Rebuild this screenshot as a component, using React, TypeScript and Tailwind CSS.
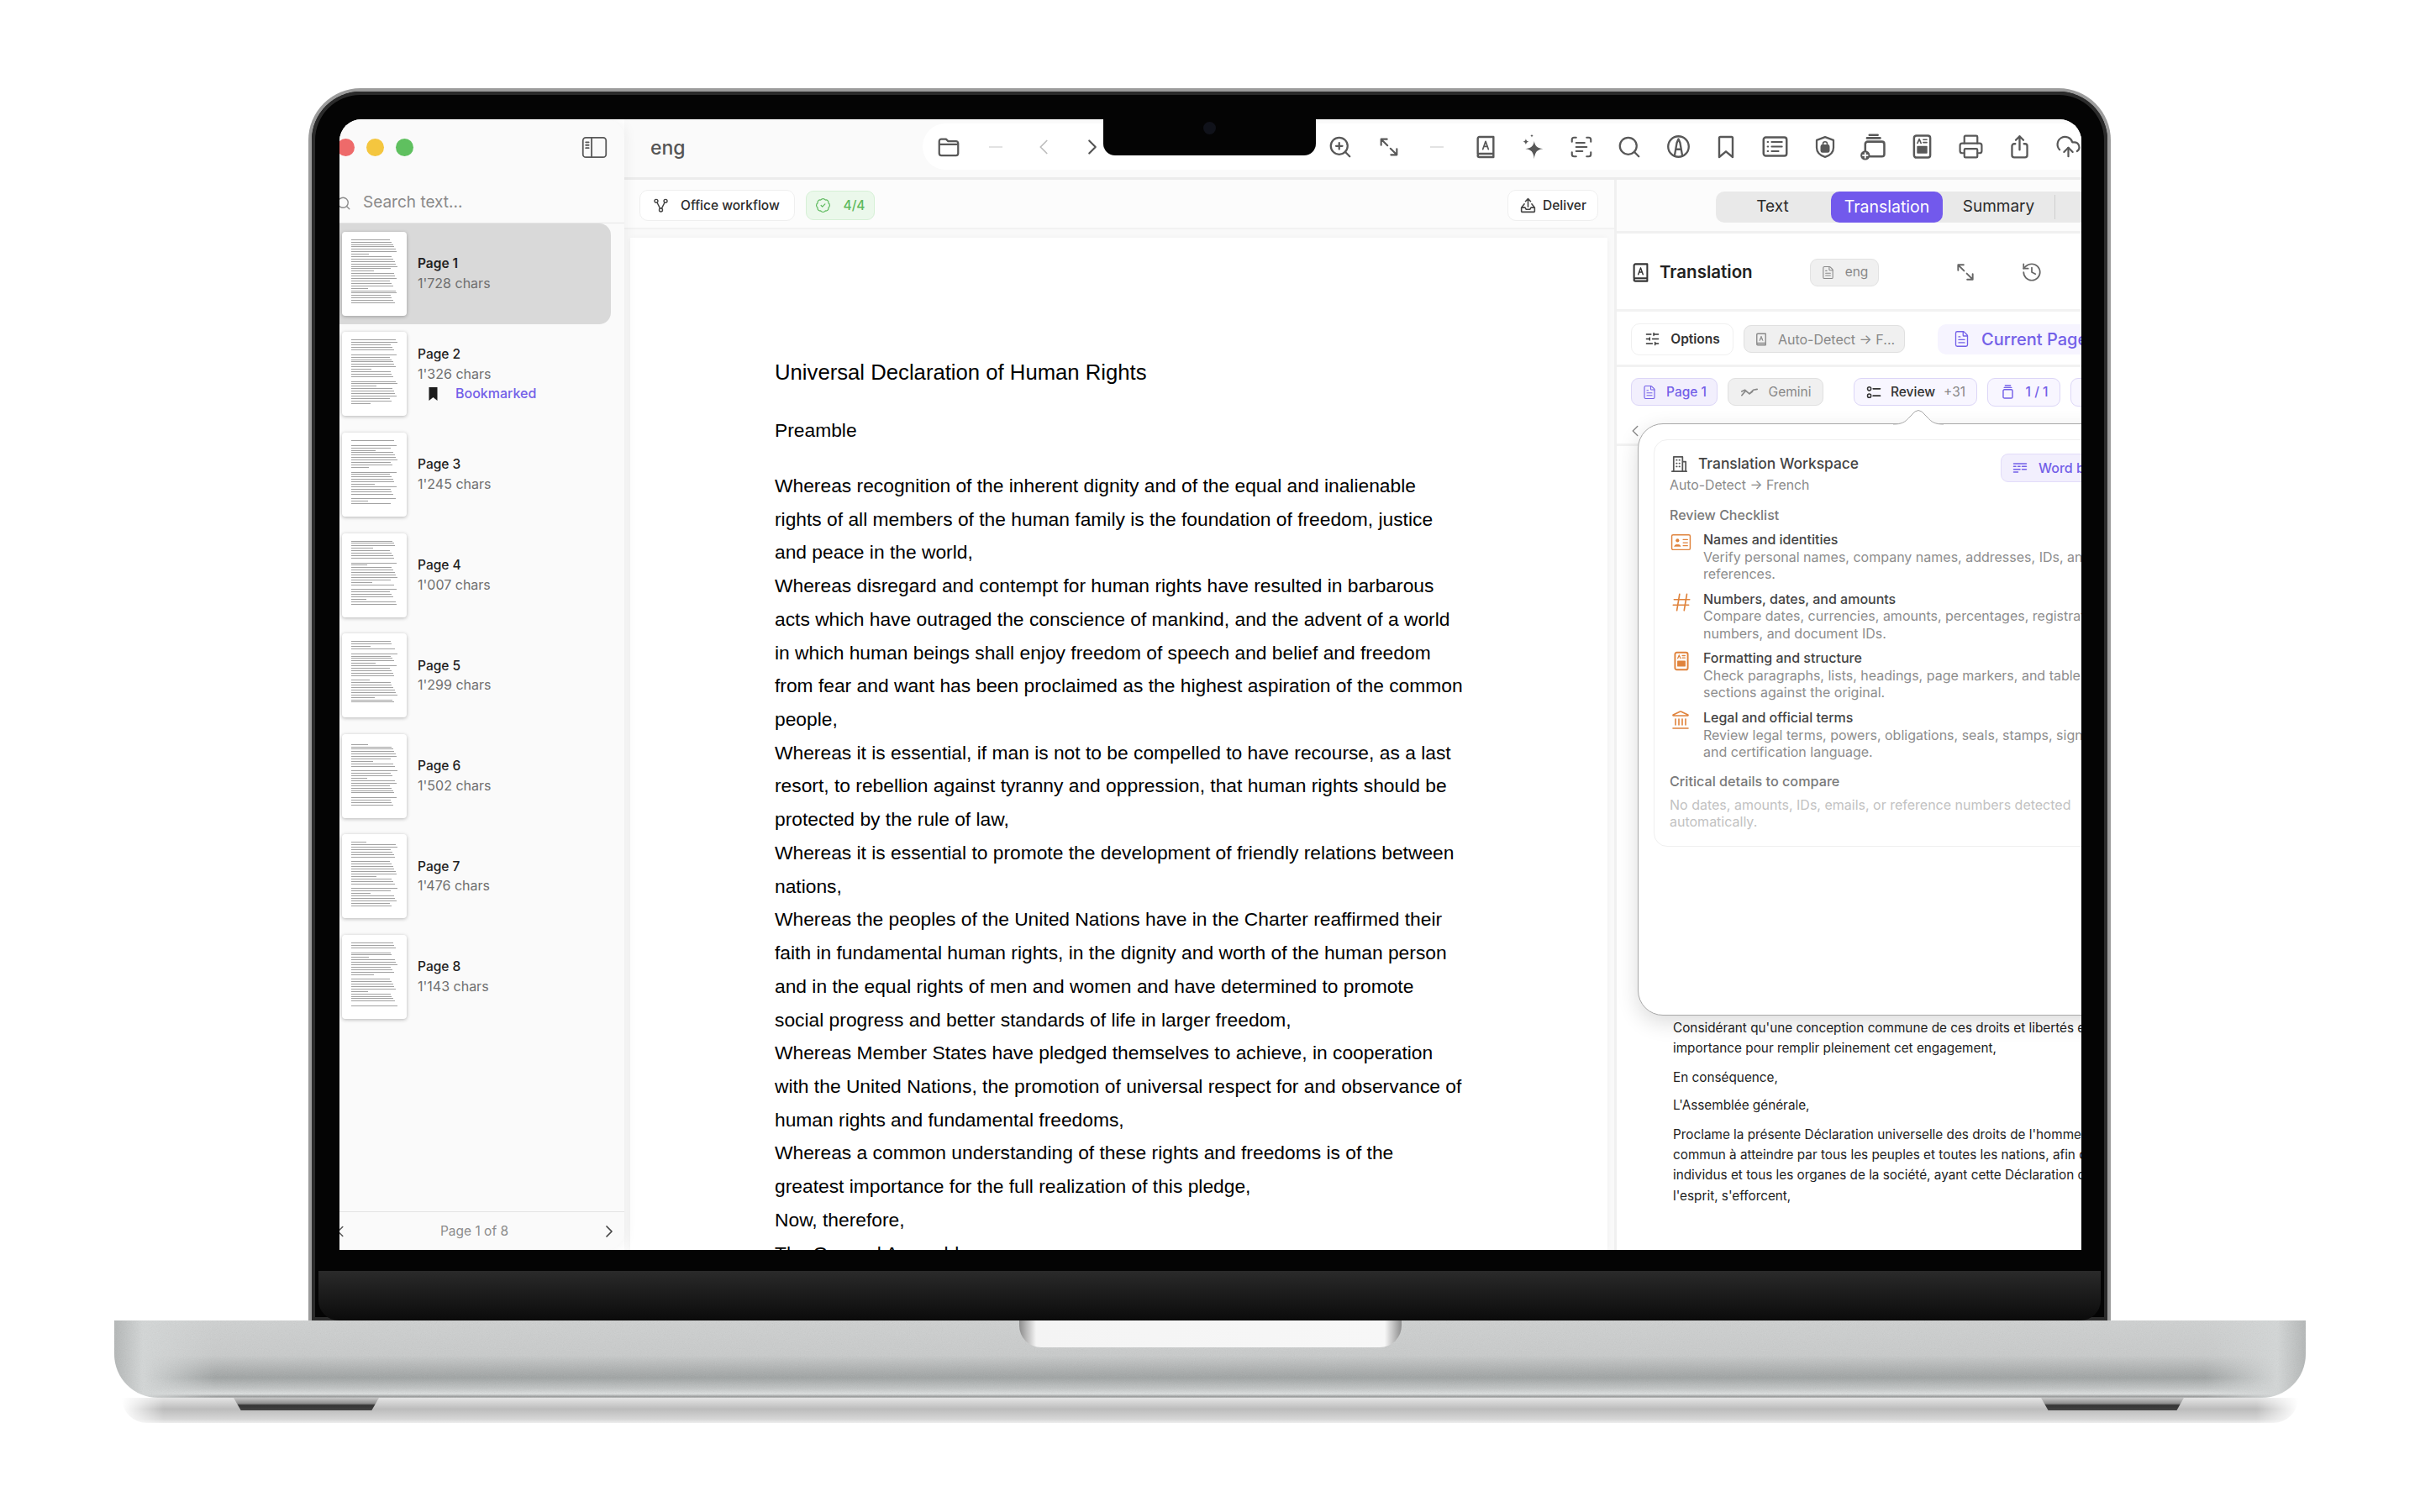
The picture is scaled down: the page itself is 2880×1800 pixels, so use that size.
import { BadgeCheck, ChevronLeft, ChevronRight, CloudUpload, FileText, History, Landmark, Printer, ScanText, Search, SlidersHorizontal, ZoomIn } from 'lucide-react';
import type { ReactNode } from 'react';

const PAGES = ["1'728", "1'326", "1'245", "1'007", "1'299", "1'502", "1'476", "1'143"];

const DOC_LINES = [
  'Whereas recognition of the inherent dignity and of the equal and inalienable',
  'rights of all members of the human family is the foundation of freedom, justice',
  'and peace in the world,',
  'Whereas disregard and contempt for human rights have resulted in barbarous',
  'acts which have outraged the conscience of mankind, and the advent of a world',
  'in which human beings shall enjoy freedom of speech and belief and freedom',
  'from fear and want has been proclaimed as the highest aspiration of the common',
  'people,',
  'Whereas it is essential, if man is not to be compelled to have recourse, as a last',
  'resort, to rebellion against tyranny and oppression, that human rights should be',
  'protected by the rule of law,',
  'Whereas it is essential to promote the development of friendly relations between',
  'nations,',
  'Whereas the peoples of the United Nations have in the Charter reaffirmed their',
  'faith in fundamental human rights, in the dignity and worth of the human person',
  'and in the equal rights of men and women and have determined to promote',
  'social progress and better standards of life in larger freedom,',
  'Whereas Member States have pledged themselves to achieve, in cooperation',
  'with the United Nations, the promotion of universal respect for and observance of',
  'human rights and fundamental freedoms,',
  'Whereas a common understanding of these rights and freedoms is of the',
  'greatest importance for the full realization of this pledge,',
  'Now, therefore,',
  'The General Assembly,',
];

const CHECKLIST = [
  { title: 'Names and identities', lines: ['Verify personal names, company names, addresses, IDs, and', 'references.'], icon: <ContactIcon /> },
  { title: 'Numbers, dates, and amounts', lines: ['Compare dates, currencies, amounts, percentages, registration', 'numbers, and document IDs.'], icon: <HashIcon /> },
  { title: 'Formatting and structure', lines: ['Check paragraphs, lists, headings, page markers, and table', 'sections against the original.'], icon: <DocImageIcon className="w-[26px] h-[26px] text-[#e0833c]" /> },
  { title: 'Legal and official terms', lines: ['Review legal terms, powers, obligations, seals, stamps, signatures,', 'and certification language.'], icon: <Landmark className="w-[24px] h-[24px] text-[#e0833c]" strokeWidth={1.6} /> },
];

type IconProps = { className?: string };

function Svg({ className, children }: IconProps & { children: ReactNode }) {
  return (
    <svg viewBox="0 0 24 24" fill="none" stroke="currentColor" strokeWidth={1.8} strokeLinecap="round" strokeLinejoin="round" className={className}>
      {children}
    </svg>
  );
}

function FolderIcon({ className }: IconProps) {
  return <Svg className={className}><path d="M3 7.500V18a2 2 0 0 0 2 2h14a2 2 0 0 0 2-2V8.500a2 2 0 0 0-2-2h-7.500L9.500 4.500H5a2 2 0 0 0-2 2zM3 9.500h18" /></Svg>;
}
function ExpandIcon({ className }: IconProps) {
  return <Svg className={className}><path d="M4 10V4h6M4 4l6.500 6.500M20 14v6h-6M20 20l-6.500-6.500" /></Svg>;
}
function BookIcon({ className }: IconProps) {
  return (
    <Svg className={className}>
      <path d="M5 18V4.500A1.500 1.500 0 0 1 6.500 3H19v15H6.500A1.500 1.500 0 0 0 5 19.500 1.500 1.500 0 0 0 6.500 21H19v-3" />
      <path d="M9.500 14l2.500-7 2.500 7M10.400 11.500h3.200" strokeWidth={1.3} />
    </Svg>
  );
}
function SparkleIcon({ className }: IconProps) {
  return (
    <svg viewBox="0 0 24 24" fill="currentColor" className={className}>
      <path d="M14 7c.6 4 2.500 6 7.500 6.500C16.500 14 14.600 16 14 22c-.6-6-2.500-8-7.500-8.500C11.500 13 13.400 11 14 7z" />
      <path d="M7 5c.2 1.600 1 2.300 2.500 2.500C8 7.700 7.200 8.500 7 10c-.2-1.500-1-2.300-2.500-2.500C6 7.300 6.800 6.600 7 5zM12 1c.1 1 .6 1.400 1.500 1.500-.9.100-1.400.6-1.500 1.500-.1-.9-.6-1.400-1.500-1.500.9-.1 1.400-.5 1.500-1.500z" />
    </svg>
  );
}
function NibIcon({ className }: IconProps) {
  return <Svg className={className}><circle cx="12" cy="12" r="9.500" /><path d="M8.500 20l2-11.500L12 5l1.500 3.500 2 11.500M10.500 14.500h3" /></Svg>;
}
function BookmarkIcon({ className }: IconProps) {
  return <Svg className={className}><path d="M7 3h10a1 1 0 0 1 1 1v17l-6-5-6 5V4a1 1 0 0 1 1-1z" /></Svg>;
}
function ListCardIcon({ className }: IconProps) {
  return <Svg className={className}><rect x="2" y="4" width="20" height="16" rx="2" /><path d="M5.500 8h.5M9 8h9M5.500 12h.5M9 12h9M5.500 16h.5M9 16h6" strokeWidth={1.4} /></Svg>;
}
function ShieldIcon({ className }: IconProps) {
  return (
    <Svg className={className}>
      <path d="M12 2.500l8 3v7c0 4.500-3.500 7.500-8 9-4.500-1.500-8-4.500-8-9v-7z" />
      <rect x="8.500" y="10.500" width="7" height="6" rx="1" fill="currentColor" />
      <path d="M10 10.500V9a2 2 0 0 1 4 0v1.500" strokeWidth={1.3} />
    </Svg>
  );
}
function StackPlusIcon({ className }: IconProps) {
  return (
    <Svg className={className}>
      <path d="M9 2h7M7 4.500h11M5.500 16V9.500a2 2 0 0 1 2-2h12a2 2 0 0 1 2 2V18a2 2 0 0 1-2 2h-10" />
      <circle cx="5.500" cy="19" r="4" fill="currentColor" stroke="none" />
      <path d="M5.500 17v4M3.500 19h4" stroke="#fff" strokeWidth={1.3} />
    </Svg>
  );
}
function DocImageIcon({ className }: IconProps) {
  return (
    <Svg className={className}>
      <rect x="5" y="2.500" width="14" height="19" rx="2" />
      <path d="M8 9l1.500-3.500L11 9M13 6h3M13 8.500h3" strokeWidth={1.2} />
      <path d="M8 12h8v5.500H8z" fill="currentColor" strokeWidth={1} />
    </Svg>
  );
}
function ShareIcon({ className }: IconProps) {
  return <Svg className={className}><path d="M12 15V2.500M8.500 6L12 2.500 15.500 6M8 9.500H7a2 2 0 0 0-2 2V20a2 2 0 0 0 2 2h10a2 2 0 0 0 2-2v-8.500a2 2 0 0 0-2-2h-1" /></Svg>;
}
function SidebarIcon({ className }: IconProps) {
  return <Svg className={className}><rect x="2" y="3.500" width="20" height="17" rx="2.500" strokeWidth={1.3} /><path d="M9.500 3.500v17M4.500 7.500h2.500M4.500 10h2.500M4.500 12.500h2.500" strokeWidth={1.3} /></Svg>;
}
function WorkflowIcon({ className }: IconProps) {
  return <Svg className={className}><circle cx="5" cy="5.500" r="2.500" /><circle cx="19" cy="5.500" r="2.500" /><circle cx="12" cy="19" r="2.500" /><path d="M6.500 8l4.300 8.500M17.500 8l-4.300 8.500" /></Svg>;
}
function DeliverIcon({ className }: IconProps) {
  return <Svg className={className}><path d="M12 14V3M8.500 6.500L12 3l3.500 3.500M7 10l-4 5v5a1 1 0 0 0 1 1h16a1 1 0 0 0 1-1v-5l-4-5M3 15h5l1.500 2.500h5L16 15h5" /></Svg>;
}
function WaveIcon({ className }: IconProps) {
  return <Svg className={className}><path d="M2 16l5-6 5 4 5-5 5-1M2 11l4-2 6 5 4-3" /></Svg>;
}
function ReviewIcon({ className }: IconProps) {
  return <Svg className={className}><circle cx="5.500" cy="7" r="2.500" /><circle cx="5.500" cy="17" r="2.500" /><path d="M11 7h10M11 17h10" strokeWidth={2} /></Svg>;
}
function JarIcon({ className }: IconProps) {
  return <Svg className={className}><path d="M8 2.500h8M6.500 5.500h11" /><rect x="5" y="8.500" width="14" height="13" rx="2" /></Svg>;
}
function WrapIcon({ className }: IconProps) {
  return <Svg className={className}><path d="M3 6h18M3 10h3M9 10h3M15 10h6M3 14h9M15 14h6M3 18h6" /></Svg>;
}
function BuildingIcon({ className }: IconProps) {
  return <Svg className={className}><path d="M5 21V3h11v18M16 9h4v12M3 21h18M8.500 7h.5M12 7h.5M8.500 11h.5M12 11h.5M8.500 15h.5M12 15h.5" /></Svg>;
}
function ContactIcon() {
  return (
    <Svg className="w-[25px] h-[25px] text-[#e0833c]">
      <rect x="1.500" y="3.500" width="21" height="17" rx="1.500" strokeWidth={1.4} />
      <circle cx="8" cy="10" r="2" fill="currentColor" stroke="none" />
      <path d="M4.500 16.500c.5-2.500 6.500-2.500 7 0z" fill="currentColor" strokeWidth={0.6} />
      <path d="M14.500 9h5M14.500 12.500h5M14.500 16h5" strokeWidth={1.2} />
    </Svg>
  );
}
function HashIcon() {
  return <Svg className="w-[26px] h-[26px] text-[#e0833c]"><path d="M10 3L7 21M18 3l-3 18M4 9h17M3 15h17" strokeWidth={1.5} /></Svg>;
}

function ToolIcon({ children }: { children: ReactNode }) {
  return <div className="w-[57.700px] flex-none flex items-center justify-center text-[#585858]">{children}</div>;
}

function Divider() {
  return <div className="w-[16px] h-[2px] bg-[#e2e2e2]" />;
}

function Thumb({ seed }: { seed: number }) {
  const lines = Array.from({ length: 27 }, (_, i) => {
    if (seed > 0 && (i * 3 + seed) % 11 === 5) return 0;
    if ((i + seed) % 7 === 6) return 32 + ((i * 5) % 24);
    return 84 + ((i * 37 + seed * 13) % 17);
  });
  return (
    <div className="w-[77px] h-[100px] flex-none bg-white rounded-[4px] shadow-[0_1px_4px_rgba(0,0,0,0.28)] pt-[9px] px-[11px] flex flex-col gap-[1.900px]">
      {lines.map((w, i) => (
        <div key={i} className="h-[1px] bg-[#a2a2a2]" style={{ width: `${w}%`, opacity: w === 0 ? 0 : 1 }} />
      ))}
    </div>
  );
}

function Sidebar() {
  return (
    <aside className="w-[339px] flex-none flex flex-col bg-[#fafafa] rounded-r-[22px] shadow-[3px_0_14px_rgba(0,0,0,0.05)] z-10">
      <div className="h-[66px] flex-none flex items-center justify-between pr-[19px]">
        <div className="flex items-center gap-[14px] -ml-[3px]">
          <div className="w-[21px] h-[21px] rounded-full bg-[#ee6a6a]" />
          <div className="w-[21px] h-[21px] rounded-full bg-[#f4c63f]" />
          <div className="w-[21px] h-[21px] rounded-full bg-[#5fc05f]" />
        </div>
        <SidebarIcon className="w-[33px] h-[33px] text-[#585858]" />
      </div>
      <div className="h-[58px] flex-none flex items-center gap-[14px] pt-[10px] -ml-[4px] border-b border-[#e6e6e6] text-[#8a8a8a]">
        <Search className="w-[18px] h-[18px] flex-none" strokeWidth={1.8} />
        <span className="text-[19px]">Search text...</span>
      </div>
      <div className="flex-1 flex flex-col">
        {PAGES.map((chars, i) => (
          <div key={i} className={`h-[119.600px] flex-none flex items-center gap-[13px] pl-[3px] w-[323px] rounded-r-[14px] ${i === 0 ? 'bg-[#d9d9d9]' : ''}`}>
            <Thumb seed={i} />
            <div className="flex flex-col text-[15.500px] leading-[23.500px]">
              <span className={`text-[#222] ${i === 0 ? 'font-semibold' : 'font-medium'}`}>Page {i + 1}</span>
              <span className="text-[16px] text-[#6f6f6f]">{chars} chars</span>
              {i === 1 && (
                <span className="flex items-center text-[16px] text-[#7360e8] font-medium">
                  <svg viewBox="0 0 10 16" className="w-[11px] h-[16px] ml-[13px] mr-[21px]" fill="#1c1c1c"><path d="M0 0h10v16L5 12 0 16z" /></svg>
                  Bookmarked
                </span>
              )}
            </div>
          </div>
        ))}
      </div>
      <div className="h-[46px] flex-none border-t border-[#e4e4e4] flex items-center justify-between pr-[6px] -ml-[10px] text-[#8c8c8c]">
        <ChevronLeft className="w-[22px] h-[22px] text-[#555]" strokeWidth={1.7} />
        <span className="text-[15.500px]">Page 1 of 8</span>
        <ChevronRight className="w-[24px] h-[24px] text-[#444]" strokeWidth={1.7} />
      </div>
    </aside>
  );
}

function TopBar() {
  return (
    <header className="h-[72px] flex-none flex border-b-[3px] border-[#ececec] bg-[#fafafa]">
      <div className="w-[355px] flex-none pl-[31px] pt-[18px] text-[23px] leading-[32px] font-medium text-[#555]">eng</div>
      <div className="flex-1 h-[55px] mt-[5px] bg-white rounded-l-[28px] flex items-center overflow-hidden">
        <div className="w-[58px] flex-none flex justify-center pl-[3px] text-[#585858]"><FolderIcon className="w-[30px] h-[30px]" /></div>
        <div className="w-[57px] flex-none flex justify-center"><Divider /></div>
        <div className="w-[57px] flex-none flex justify-center"><ChevronLeft className="w-[30px] h-[30px] text-[#bdbdbd]" strokeWidth={1.4} /></div>
        <div className="w-[60px] flex-none flex justify-center"><ChevronRight className="w-[30px] h-[30px] text-[#555]" strokeWidth={1.7} /></div>
        <div className="w-[236px] flex-none" />
        <ToolIcon><ZoomIn className="w-[30px] h-[30px]" strokeWidth={1.8} /></ToolIcon>
        <ToolIcon><ExpandIcon className="w-[28px] h-[28px]" /></ToolIcon>
        <ToolIcon><Divider /></ToolIcon>
        <ToolIcon><BookIcon className="w-[32px] h-[32px]" /></ToolIcon>
        <ToolIcon><SparkleIcon className="w-[34px] h-[34px] -ml-[5px]" /></ToolIcon>
        <ToolIcon><ScanText className="w-[30px] h-[30px] -ml-[3px]" strokeWidth={1.7} /></ToolIcon>
        <ToolIcon><Search className="w-[30px] h-[30px] -ml-[4px]" strokeWidth={1.8} /></ToolIcon>
        <ToolIcon><NibIcon className="w-[31px] h-[31px] -ml-[3px]" /></ToolIcon>
        <ToolIcon><BookmarkIcon className="w-[32px] h-[32px] -ml-[4px]" /></ToolIcon>
        <ToolIcon><ListCardIcon className="w-[33px] h-[33px] -ml-[4px]" /></ToolIcon>
        <ToolIcon><ShieldIcon className="w-[30px] h-[30px]" /></ToolIcon>
        <ToolIcon><StackPlusIcon className="w-[34px] h-[34px]" /></ToolIcon>
        <ToolIcon><DocImageIcon className="w-[33px] h-[33px]" /></ToolIcon>
        <ToolIcon><Printer className="w-[31px] h-[31px] ml-[2px]" strokeWidth={1.7} /></ToolIcon>
        <ToolIcon><ShareIcon className="w-[31px] h-[31px] ml-[3px]" /></ToolIcon>
        <ToolIcon><CloudUpload className="w-[31px] h-[31px] ml-[3px]" strokeWidth={1.7} /></ToolIcon>
      </div>
    </header>
  );
}

function DocumentColumn() {
  return (
    <section className="w-[1178px] flex-none flex flex-col bg-[#f9f9f9] min-h-0">
      <div className="h-[59px] flex-none flex items-center justify-between pt-[4px] pl-[18px] pr-[19px] bg-[#fcfcfc] border-b-[2px] border-[#f2f2f2]">
        <div className="flex items-center gap-[13px]">
          <div className="w-[185px] h-[37px] flex items-center gap-[14px] pl-[15px] bg-white border border-[#efefef] rounded-[10px] text-[15.500px] font-medium text-[#2c2c2c] whitespace-nowrap">
            <WorkflowIcon className="w-[19px] h-[19px] flex-none text-[#444]" />
            Office workflow
          </div>
          <div className="w-[82px] h-[35px] flex items-center justify-center gap-[14px] bg-[#ebf8eb] border border-[#d6f0d6] rounded-[9px] text-[15.500px] font-medium text-[#5cb95c]">
            <BadgeCheck className="w-[19px] h-[19px]" strokeWidth={1.5} />
            4/4
          </div>
        </div>
        <div className="w-[108px] h-[37px] flex items-center justify-center gap-[7px] bg-white border border-[#efefef] rounded-[10px] text-[15.500px] font-medium text-[#2c2c2c]">
          <DeliverIcon className="w-[21px] h-[21px] flex-none text-[#444]" />
          Deliver
        </div>
      </div>
      <div className="flex-1 ml-[7px] mr-[8px] mt-[10px] bg-white pt-[140px] pl-[172px] overflow-hidden shadow-[0_0_6px_rgba(0,0,0,0.04)] font-['Liberation_Sans',sans-serif] text-black whitespace-nowrap">
        <div className="text-[25.700px] leading-[40px]">Universal Declaration of Human Rights</div>
        <div className="text-[22.800px] leading-[40px] mt-[29px]">Preamble</div>
        <div className="text-[22.800px] leading-[39.720px] mt-[27px]">
          {DOC_LINES.map((line) => (
            <div key={line}>{line}</div>
          ))}
        </div>
      </div>
    </section>
  );
}

function ReviewPopover() {
  return (
    <div className="absolute left-[25px] top-[290px] w-[620px] h-[705px] bg-white rounded-[30px] border border-[#a9a9a9] shadow-[0_8px_26px_rgba(0,0,0,0.14)] pl-[18px] pt-[18px] z-20">
      <svg viewBox="0 0 60 20" className="absolute left-[303px] -top-[18px] w-[60px] h-[20px]">
        <path d="M0 18C10 18 14 16 20 9L26 3Q30 0 34 3L40 9C46 16 50 18 60 18V20H0Z" fill="#fff" />
        <path d="M0 18C10 18 14 16 20 9L26 3Q30 0 34 3L40 9C46 16 50 18 60 18" fill="none" stroke="#a9a9a9" strokeWidth="1" />
      </svg>
      <div className="w-[600px] h-[485px] border border-[#efefef] rounded-[16px] pl-[18px] pt-[16px] whitespace-nowrap">
        <div className="flex items-start">
          <div className="w-[394px] flex-none">
            <div className="flex items-center gap-[11px] h-[24px] text-[17.400px] font-medium text-[#444]">
              <BuildingIcon className="w-[23px] h-[23px] flex-none text-[#555]" />
              Translation Workspace
            </div>
            <div className="mt-[4px] text-[15.800px] leading-[20px] text-[#8a8a8a]">Auto-Detect → French</div>
          </div>
          <div className="w-[170px] h-[34px] flex-none flex items-center gap-[12px] pl-[12px] bg-[#f2effd] border border-[#e2dcf9] rounded-[9px] text-[16px] font-medium text-[#7360e8]">
            <WrapIcon className="w-[20px] h-[20px] flex-none" />
            Word by word
          </div>
        </div>
        <div className="mt-[15px] text-[16px] leading-[20px] font-medium text-[#7a7a7a]">Review Checklist</div>
        <div className="mt-[9px] flex flex-col gap-[9.200px]">
          {CHECKLIST.map((item) => (
            <div key={item.title} className="flex">
              <div className="w-[40px] flex-none flex justify-start pl-[1px] pt-[1px]">{item.icon}</div>
              <div className="flex flex-col text-[16px] leading-[20.500px]">
                <span className="font-medium text-[#444]">{item.title}</span>
                {item.lines.map((line) => (
                  <span key={line} className="text-[#8d8d8d]">{line}</span>
                ))}
              </div>
            </div>
          ))}
        </div>
        <div className="mt-[14px] text-[16.200px] leading-[20px] font-medium text-[#7a7a7a]">Critical details to compare</div>
        <div className="mt-[8px] text-[16px] leading-[20px] text-[#c2c2c2]">
          <div>No dates, amounts, IDs, emails, or reference numbers detected</div>
          <div>automatically.</div>
        </div>
      </div>
    </div>
  );
}

function TranslationPanel() {
  return (
    <section className="flex-1 relative flex flex-col border-l-[3px] border-[#f0f0f0] bg-white min-w-0">
      <div className="h-[64px] flex-none flex items-start pt-[14px] pl-[118px] border-b-[3px] border-[#f0f0f0] bg-[#fcfcfc]">
        <div className="flex items-center h-[37px] w-[500px] flex-none bg-[#e9e9e9] rounded-[10px] text-[19px] text-[#2b2b2b]">
          <div className="w-[135px] text-center">Text</div>
          <div className="w-[133px] ml-[2px] h-full flex items-center justify-center rounded-[10px] bg-[#7259ec] text-[19.500px] text-white">Translation</div>
          <div className="w-[134px] text-center border-r border-[#cfcfcf]">Summary</div>
        </div>
      </div>
      <div className="h-[93px] flex-none flex items-center pt-[2px] border-b-[3px] border-[#f2f2f2]">
        <BookIcon className="ml-[15px] w-[27px] h-[27px] flex-none text-[#333]" />
        <span className="ml-[9px] w-[180px] flex-none text-[20.500px] font-semibold text-[#222]">Translation</span>
        <div className="-ml-[1px] w-[82px] h-[33px] flex items-center justify-center gap-[12px] bg-[#f0f0f0] border border-[#e2e2e2] rounded-[9px] text-[15.500px] text-[#888]">
          <FileText className="w-[17px] h-[17px]" strokeWidth={1.5} />
          eng
        </div>
        <ExpandIcon className="ml-[90px] w-[26px] h-[26px] text-[#666]" />
        <History className="ml-[53px] w-[26px] h-[26px] text-[#666]" strokeWidth={1.6} />
      </div>
      <div className="h-[66px] flex-none flex items-center pl-[17px] pt-[2px] border-b-[3px] border-[#f2f2f2]">
        <div className="w-[122px] h-[38px] flex-none flex items-center justify-center gap-[12px] bg-white border border-[#f0f0f0] rounded-[10px] text-[15.500px] font-semibold text-[#333]">
          <SlidersHorizontal className="w-[19px] h-[19px] flex-none" strokeWidth={1.7} />
          Options
        </div>
        <div className="ml-[12px] w-[192px] h-[33px] flex-none flex items-center justify-center gap-[11px] bg-[#f0f0f0] border border-[#e0e0e0] rounded-[9px] text-[16px] text-[#888] whitespace-nowrap">
          <BookIcon className="w-[18px] h-[18px] flex-none" />
          Auto-Detect → F...
        </div>
        <div className="ml-[39px] w-[220px] h-[36px] flex-none flex items-center gap-[13px] pl-[18px] bg-[#f6f4ff] rounded-[10px] text-[20px] font-medium text-[#7360e8] whitespace-nowrap">
          <FileText className="w-[21px] h-[21px] flex-none" strokeWidth={1.5} />
          Current Page
        </div>
      </div>
      <div className="h-[60px] flex-none flex items-center pl-[17px] pb-[1px] text-[15.500px] font-medium whitespace-nowrap">
        <div className="w-[103px] h-[33px] flex-none flex items-center justify-center gap-[11px] bg-[#f2effd] border border-[#dcd6f7] rounded-[9px] text-[#7360e8]">
          <FileText className="w-[18px] h-[18px] flex-none" strokeWidth={1.5} />
          Page 1
        </div>
        <div className="ml-[12px] w-[114px] h-[33px] flex-none flex items-center justify-center gap-[12px] bg-[#f0f0f0] border border-[#e0e0e0] rounded-[9px] font-normal text-[#888]">
          <WaveIcon className="w-[22px] h-[22px] flex-none" />
          Gemini
        </div>
        <div className="ml-[36px] w-[147px] h-[33px] flex-none flex items-center justify-center gap-[10px] bg-[#f8f6ff] border border-[#dcd6f7] rounded-[9px] text-[#333]">
          <ReviewIcon className="w-[20px] h-[20px] flex-none" />
          Review
          <span className="font-normal text-[#888]">+31</span>
        </div>
        <div className="ml-[12px] w-[87px] h-[34px] flex-none flex items-center justify-center gap-[12px] bg-[#f8f6ff] border border-[#dcd6f7] rounded-[9px] text-[#7360e8]">
          <JarIcon className="w-[19px] h-[19px] flex-none" />
          1 / 1
        </div>
        <div className="ml-[12px] w-[60px] h-[34px] flex-none bg-[#f8f6ff] border border-[#dcd6f7] rounded-[9px]" />
      </div>
      <div className="h-[34px] flex-none flex items-center border-b-[3px] border-[#f2f2f2]">
        <ChevronLeft className="ml-[11px] w-[22px] h-[22px] text-[#8a8a8a]" strokeWidth={1.5} />
      </div>
      <div className="flex-1 pt-[681px] pl-[67px] font-['Inter',sans-serif] text-[15.300px] leading-[24.400px] text-[#222] whitespace-nowrap">
        <div>Considérant qu'une conception commune de ces droits et libertés est de la plus haute</div>
        <div>importance pour remplir pleinement cet engagement,</div>
        <div className="mt-[10px]">En conséquence,</div>
        <div className="mt-[9px]">L'Assemblée générale,</div>
        <div className="mt-[10px]">Proclame la présente Déclaration universelle des droits de l'homme comme l'idéal</div>
        <div>commun à atteindre par tous les peuples et toutes les nations, afin que tous les</div>
        <div>individus et tous les organes de la société, ayant cette Déclaration constamment à</div>
        <div>l'esprit, s'efforcent,</div>
      </div>
      <ReviewPopover />
    </section>
  );
}

export default function App() {
  return (
    <div className="w-[2880px] h-[1800px] bg-white overflow-hidden flex flex-col items-center pt-[105px] font-['Inter',sans-serif]">
      {/* lid */}
      <div className="w-[2145px] h-[1467px] flex-none mr-[1px] rounded-t-[62px] bg-[#9c9c9c] pt-[4px] px-[4px]">
        <div className="h-full rounded-t-[58px] bg-[#040404] shadow-[inset_0_0_0_4px_#2b2b2b] flex flex-col">
          <div className="pl-[33px] pr-[31px] pt-[33px] pb-[25px] flex-none">
            <div className="relative h-[1346px] rounded-t-[26px] bg-white overflow-hidden flex">
              <Sidebar />
              <div className="flex-1 min-w-0 flex flex-col">
                <TopBar />
                <div className="flex-1 min-h-0 flex">
                  <DocumentColumn />
                  <TranslationPanel />
                </div>
              </div>
              {/* notch */}
              <div className="absolute left-[909px] top-0 w-[253px] h-[43px] bg-[#040404] rounded-b-[14px] z-30 flex justify-center pt-[3px]">
                <div className="w-[15px] h-[15px] rounded-full bg-[#10121a]" />
              </div>
            </div>
          </div>
          <div className="flex-1 mx-[8px] rounded-bl-[24px] rounded-br-[24px] bg-[linear-gradient(180deg,#2a2a2a,#0b0b0b)]" />
        </div>
      </div>
      {/* base */}
      <div className="relative w-[2608px] h-[92px] flex-none flex justify-center rounded-b-[52px] overflow-hidden bg-[linear-gradient(90deg,#b4b7b7_0px,#d4d7d7_34px,rgba(200,203,203,0)_120px,rgba(200,203,203,0)_2488px,#d4d7d7_2574px,#b4b7b7_2608px),linear-gradient(180deg,#cfd1d1_0%,#c9cbcb_45%,#adb0b0_64%,#9fa3a3_74%,#c2c5c5_88%,#dcdfdf_95%,#8f9191_99%,#cfd1d1_100%)]">
        <svg className="absolute inset-0 w-full h-full opacity-[0.14]">
          <filter id="grain">
            <feTurbulence type="fractalNoise" baseFrequency="0.9" numOctaves="2" />
            <feColorMatrix type="saturate" values="0" />
          </filter>
          <rect width="100%" height="100%" filter="url(#grain)" />
        </svg>
        <div className="relative w-[455px] h-[32px] rounded-b-[26px] bg-[linear-gradient(90deg,#8c8c8c_0px,#f4f4f4_20px,#f7f7f7_435px,#8c8c8c_455px)]" />
      </div>
      {/* shadow and feet */}
      <div className="w-[2590px] h-[30px] flex-none flex justify-between pl-[133px] pr-[136px] rounded-b-[30px] bg-[linear-gradient(90deg,#ffffff,rgba(255,255,255,0)_50px,rgba(255,255,255,0)_2540px,#ffffff),linear-gradient(180deg,#e4e4e4,#bcbcbc_45%,#d6d6d6_85%,#eeeeee)]">
        <div className="w-[173px] h-[15px] [clip-path:polygon(0_0,100%_0,95%_100%,5%_100%)] bg-[linear-gradient(180deg,#c8c8c8_0%,#8f8f8f_45%,#333_60%,#444_100%)]" />
        <div className="w-[170px] h-[15px] [clip-path:polygon(0_0,100%_0,95%_100%,5%_100%)] bg-[linear-gradient(180deg,#c8c8c8_0%,#8f8f8f_45%,#333_60%,#444_100%)]" />
      </div>
    </div>
  );
}
